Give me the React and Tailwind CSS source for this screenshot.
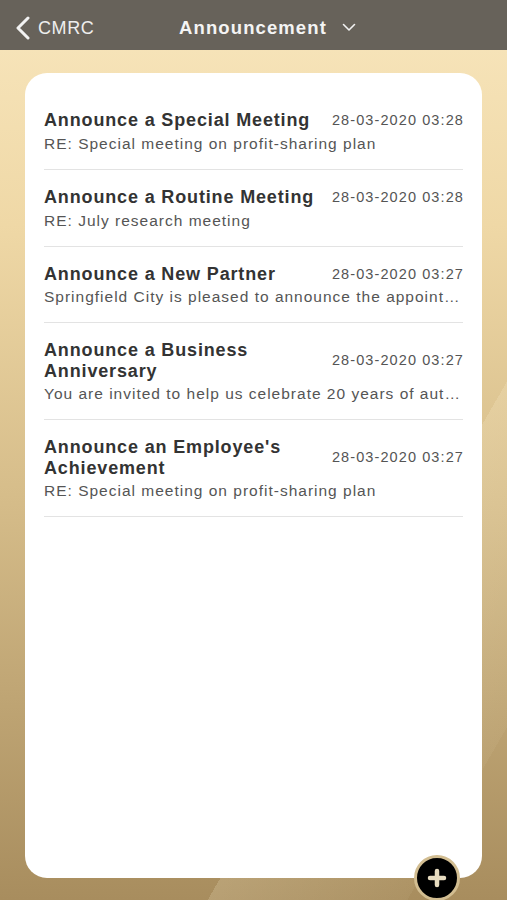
import { Plus } from 'lucide-react';

const ITEMS = [
  { title: 'Announce a Special Meeting', date: '28-03-2020 03:28', body: 'RE: Special meeting on profit-sharing plan' },
  { title: 'Announce a Routine Meeting', date: '28-03-2020 03:28', body: 'RE: July research meeting' },
  { title: 'Announce a New Partner', date: '28-03-2020 03:27', body: 'Springfield City is pleased to announce the appointment of a new partner' },
  { title: 'Announce a Business Anniversary', date: '28-03-2020 03:27', body: 'You are invited to help us celebrate 20 years of automotive excellence' },
  { title: "Announce an Employee's Achievement", date: '28-03-2020 03:27', body: 'RE: Special meeting on profit-sharing plan' },
];

export default function App() {
  return (
    <div className="h-[900px] w-full flex flex-col font-['Liberation_Sans',Arial,sans-serif] bg-[linear-gradient(180deg,#f8e6bd_0%,#efd8a6_25%,#d6bd8a_55%,#a88d5e_100%)]">
      {/* Nav bar */}
      <div className="h-[50px] shrink-0 bg-[#67625a] flex items-center relative pt-[5px]">
        <div className="flex items-center pl-[15px] text-[#eeeeee]">
          <svg width="16" height="24" viewBox="0 0 16 24" fill="none">
            <polyline points="13,2 3,12 13,22" stroke="#f2f2f2" strokeWidth="3" strokeLinecap="round" strokeLinejoin="round" />
          </svg>
          <span className="ml-[7px] text-[18px] tracking-[0.6px] leading-none">CMRC</span>
        </div>
        <div className="absolute left-0 right-0 top-[5px] bottom-0 flex items-center justify-center pointer-events-none">
          <span className="text-[18.5px] tracking-[1.1px] font-bold text-[#f4f4f4] ml-[28px]">Announcement</span>
          <svg className="ml-[15px]" width="14" height="9" viewBox="0 0 14 9" fill="none">
            <polyline points="1.5,1.5 7,7 12.5,1.5" stroke="#f2f2f2" strokeWidth="1.6" strokeLinecap="round" strokeLinejoin="round" />
          </svg>
        </div>
      </div>

      {/* Content */}
      <div className="flex-1 flex flex-col px-[25px] pt-[23px] pb-[22px] bg-[linear-gradient(120deg,transparent_70%,rgba(255,245,215,0.18)_70%,rgba(255,245,215,0.05)_90%,transparent_90%)]">
        <div className="flex-1 bg-white rounded-[22px] relative px-[19px] pt-[20px]">
          {ITEMS.map((it, i) => (
            <div key={i} className="pt-[17px] pb-[15px] border-b border-[#e3e3e3]">
              <div className="flex items-center justify-between gap-[10px]">
                <div className="text-[18px] leading-[21px] tracking-[0.85px] font-bold text-[#333333] max-w-[278px]">{it.title}</div>
                <div className="text-[14.5px] tracking-[1.1px] mr-[-1px] text-[#555555] whitespace-nowrap">{it.date}</div>
              </div>
              <div className="mt-[1px] text-[15.5px] leading-[21px] tracking-[1px] text-[#555555] truncate">{it.body}</div>
            </div>
          ))}

          <button className="absolute right-[22px] bottom-[-23px] w-[46px] h-[46px] rounded-full bg-black border-[3px] border-[#d2bd91] flex items-center justify-center">
            <Plus className="w-[24px] h-[24px] text-[#e8dcc0]" strokeWidth={4.5} />
          </button>
        </div>
      </div>
    </div>
  );
}
